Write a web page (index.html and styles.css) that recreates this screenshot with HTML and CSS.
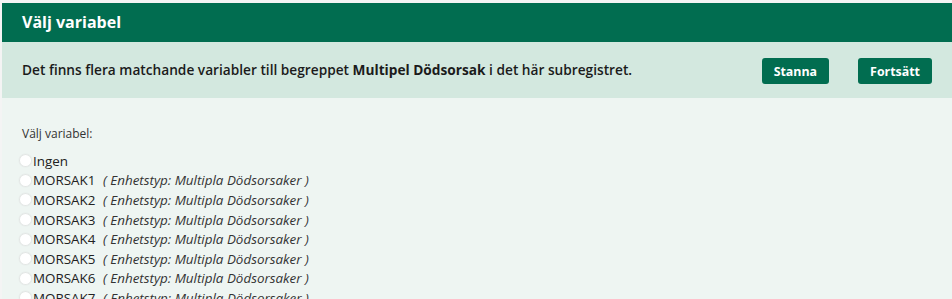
FILE: index.html
```html
<!DOCTYPE html>
<html lang="sv">
<head>
<meta charset="utf-8">
<title>Välj variabel</title>
<link rel="stylesheet" href="styles.css">
</head>
<body>
<div class="page">
  <div class="dialog">
    <div class="dialog-header">Välj variabel</div>
    <div class="dialog-notice">
      <p class="notice-text">Det finns flera matchande variabler till begreppet <strong>Multipel Dödsorsak</strong> i det här subregistret.</p>
      <div class="actions">
        <button class="btn">Stanna</button>
        <button class="btn">Fortsätt</button>
      </div>
    </div>
    <div class="dialog-body">
      <div class="label">Välj variabel:</div>
      <ul class="options">
        <li><span class="radio"></span><span class="name">Ingen</span></li>
        <li><span class="radio"></span><span class="name">MORSAK1</span><span class="type">( Enhetstyp: Multipla Dödsorsaker )</span></li>
        <li><span class="radio"></span><span class="name">MORSAK2</span><span class="type">( Enhetstyp: Multipla Dödsorsaker )</span></li>
        <li><span class="radio"></span><span class="name">MORSAK3</span><span class="type">( Enhetstyp: Multipla Dödsorsaker )</span></li>
        <li><span class="radio"></span><span class="name">MORSAK4</span><span class="type">( Enhetstyp: Multipla Dödsorsaker )</span></li>
        <li><span class="radio"></span><span class="name">MORSAK5</span><span class="type">( Enhetstyp: Multipla Dödsorsaker )</span></li>
        <li><span class="radio"></span><span class="name">MORSAK6</span><span class="type">( Enhetstyp: Multipla Dödsorsaker )</span></li>
        <li><span class="radio"></span><span class="name">MORSAK7</span><span class="type">( Enhetstyp: Multipla Dödsorsaker )</span></li>
      </ul>
    </div>
  </div>
</div>
</body>
</html>
```

FILE: styles.css
```css
html, body {
  margin: 0;
  padding: 0;
  background: #f4f4f4;
  overflow: hidden;
}
.page {
  padding: 3px 0 0 2px;
  font-family: "Open Sans", "DejaVu Sans", sans-serif;
}
.dialog {
  background: #eef5f2;
}
.dialog-header {
  background: #016d50;
  color: #ffffff;
  font-weight: 700;
  font-size: 16px;
  height: 39px;
  line-height: 39px;
  padding-left: 20px;
}
.dialog-notice {
  background: #d3e8df;
  height: 56px;
  display: flex;
  align-items: center;
  padding-left: 20px;
  padding-right: 20px;
}
.notice-text {
  margin: 0;
  flex: 1;
  font-size: 13.7px;
  font-weight: 600;
  color: #1b1b1b;
  padding-bottom: 1px;
}
.notice-text strong {
  font-weight: 700;
}
.actions {
  display: flex;
  gap: 29px;
  margin-top: 2px;
}
.btn {
  background: #016d50;
  color: #ffffff;
  border: none;
  border-radius: 3px;
  height: 26px;
  padding: 0 12px;
  font-family: inherit;
  font-size: 12.4px;
  font-weight: 700;
}
.dialog-body {
  padding: 27px 0 0 17px;
  color: #2a2a2a;
}
.label {
  font-size: 12px;
  margin: 0 0 9px 3px;
  color: #333;
}
.options {
  list-style: none;
  margin: 0;
  padding: 0;
}
.options li {
  display: flex;
  align-items: center;
  height: 19.6px;
  font-size: 13.4px;
}
.radio {
  width: 13px;
  height: 13px;
  border-radius: 50%;
  background: #ffffff;
  box-shadow: inset 0 0 0 1px #e2e6e4, 0 0 1px rgba(0,0,0,0.15);
  margin-right: 1px;
  flex: none;
}
.name {
  width: 70px;
  color: #222;
}
.type {
  font-style: italic;
  color: #333;
}
```
